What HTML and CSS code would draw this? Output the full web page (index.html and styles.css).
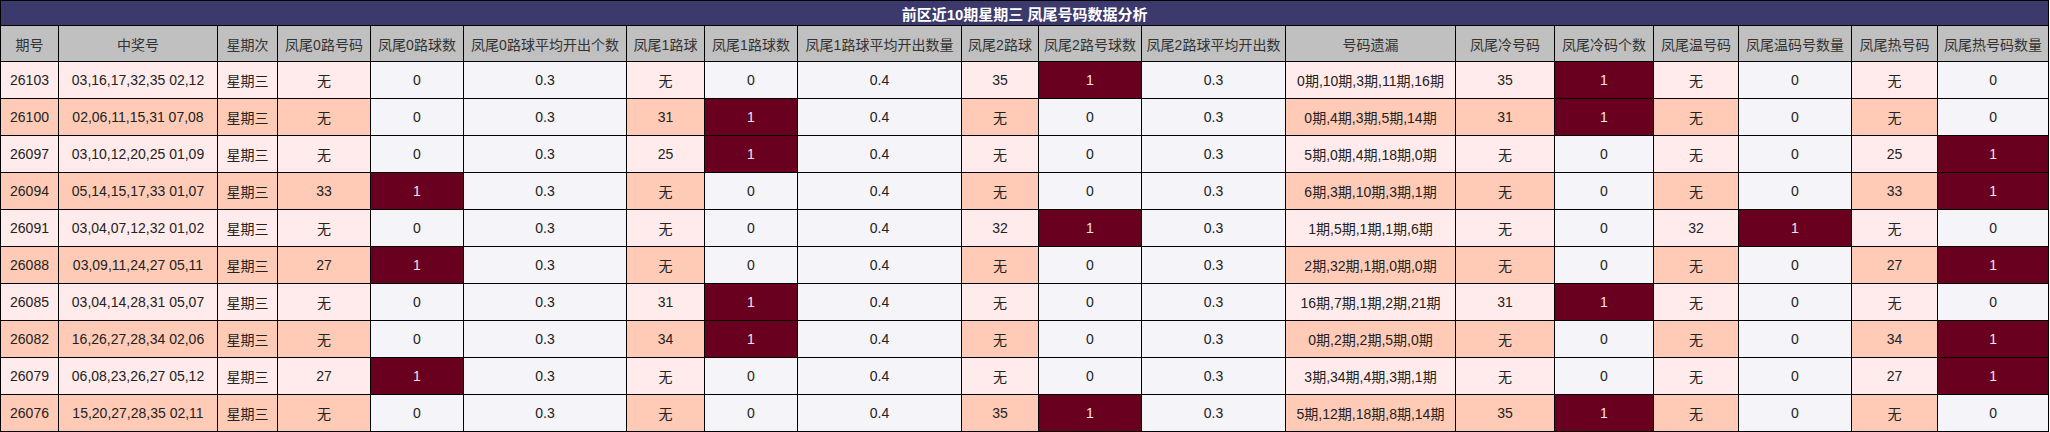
FILE: index.html
```html
<!DOCTYPE html>
<html lang="zh">
<head>
<meta charset="utf-8">
<title>凤尾号码数据分析</title>
<link rel="stylesheet" href="styles.css">
</head>
<body>
<table class="grid">
<colgroup>
<col class="w58"><col class="w159"><col class="w60"><col class="w93"><col class="w93"><col class="w163"><col class="w78"><col class="w93"><col class="w164"><col class="w77"><col class="w103"><col class="w144"><col class="w170"><col class="w99"><col class="w99"><col class="w85"><col class="w113"><col class="w86"><col class="w111">
</colgroup>
<thead>
<tr class="title-row"><th colspan="19" class="title">前区近10期星期三 凤尾号码数据分析</th></tr>
<tr class="head-row">
<th>期号</th><th>中奖号</th><th>星期次</th><th>凤尾0路号码</th><th>凤尾0路球数</th><th>凤尾0路球平均开出个数</th><th>凤尾1路球</th><th>凤尾1路球数</th><th>凤尾1路球平均开出数量</th><th>凤尾2路球</th><th>凤尾2路号球数</th><th>凤尾2路球平均开出数</th><th>号码遗漏</th><th>凤尾冷号码</th><th>凤尾冷码个数</th><th>凤尾温号码</th><th>凤尾温码号数量</th><th>凤尾热号码</th><th>凤尾热号码数量</th>
</tr>
</thead>
<tbody>
<tr class="odd"><td class="rc">26103</td><td class="rc">03,16,17,32,35 02,12</td><td class="rc">星期三</td><td class="rc">无</td><td class="gr">0</td><td class="gr">0.3</td><td class="rc">无</td><td class="gr">0</td><td class="gr">0.4</td><td class="rc">35</td><td class="hot">1</td><td class="gr">0.3</td><td class="rc">0期,10期,3期,11期,16期</td><td class="rc">35</td><td class="hot">1</td><td class="rc">无</td><td class="gr">0</td><td class="rc">无</td><td class="gr">0</td></tr>
<tr class="even"><td class="rc">26100</td><td class="rc">02,06,11,15,31 07,08</td><td class="rc">星期三</td><td class="rc">无</td><td class="gr">0</td><td class="gr">0.3</td><td class="rc">31</td><td class="hot">1</td><td class="gr">0.4</td><td class="rc">无</td><td class="gr">0</td><td class="gr">0.3</td><td class="rc">0期,4期,3期,5期,14期</td><td class="rc">31</td><td class="hot">1</td><td class="rc">无</td><td class="gr">0</td><td class="rc">无</td><td class="gr">0</td></tr>
<tr class="odd"><td class="rc">26097</td><td class="rc">03,10,12,20,25 01,09</td><td class="rc">星期三</td><td class="rc">无</td><td class="gr">0</td><td class="gr">0.3</td><td class="rc">25</td><td class="hot">1</td><td class="gr">0.4</td><td class="rc">无</td><td class="gr">0</td><td class="gr">0.3</td><td class="rc">5期,0期,4期,18期,0期</td><td class="rc">无</td><td class="gr">0</td><td class="rc">无</td><td class="gr">0</td><td class="rc">25</td><td class="hot">1</td></tr>
<tr class="even"><td class="rc">26094</td><td class="rc">05,14,15,17,33 01,07</td><td class="rc">星期三</td><td class="rc">33</td><td class="hot">1</td><td class="gr">0.3</td><td class="rc">无</td><td class="gr">0</td><td class="gr">0.4</td><td class="rc">无</td><td class="gr">0</td><td class="gr">0.3</td><td class="rc">6期,3期,10期,3期,1期</td><td class="rc">无</td><td class="gr">0</td><td class="rc">无</td><td class="gr">0</td><td class="rc">33</td><td class="hot">1</td></tr>
<tr class="odd"><td class="rc">26091</td><td class="rc">03,04,07,12,32 01,02</td><td class="rc">星期三</td><td class="rc">无</td><td class="gr">0</td><td class="gr">0.3</td><td class="rc">无</td><td class="gr">0</td><td class="gr">0.4</td><td class="rc">32</td><td class="hot">1</td><td class="gr">0.3</td><td class="rc">1期,5期,1期,1期,6期</td><td class="rc">无</td><td class="gr">0</td><td class="rc">32</td><td class="hot">1</td><td class="rc">无</td><td class="gr">0</td></tr>
<tr class="even"><td class="rc">26088</td><td class="rc">03,09,11,24,27 05,11</td><td class="rc">星期三</td><td class="rc">27</td><td class="hot">1</td><td class="gr">0.3</td><td class="rc">无</td><td class="gr">0</td><td class="gr">0.4</td><td class="rc">无</td><td class="gr">0</td><td class="gr">0.3</td><td class="rc">2期,32期,1期,0期,0期</td><td class="rc">无</td><td class="gr">0</td><td class="rc">无</td><td class="gr">0</td><td class="rc">27</td><td class="hot">1</td></tr>
<tr class="odd"><td class="rc">26085</td><td class="rc">03,04,14,28,31 05,07</td><td class="rc">星期三</td><td class="rc">无</td><td class="gr">0</td><td class="gr">0.3</td><td class="rc">31</td><td class="hot">1</td><td class="gr">0.4</td><td class="rc">无</td><td class="gr">0</td><td class="gr">0.3</td><td class="rc">16期,7期,1期,2期,21期</td><td class="rc">31</td><td class="hot">1</td><td class="rc">无</td><td class="gr">0</td><td class="rc">无</td><td class="gr">0</td></tr>
<tr class="even"><td class="rc">26082</td><td class="rc">16,26,27,28,34 02,06</td><td class="rc">星期三</td><td class="rc">无</td><td class="gr">0</td><td class="gr">0.3</td><td class="rc">34</td><td class="hot">1</td><td class="gr">0.4</td><td class="rc">无</td><td class="gr">0</td><td class="gr">0.3</td><td class="rc">0期,2期,2期,5期,0期</td><td class="rc">无</td><td class="gr">0</td><td class="rc">无</td><td class="gr">0</td><td class="rc">34</td><td class="hot">1</td></tr>
<tr class="odd"><td class="rc">26079</td><td class="rc">06,08,23,26,27 05,12</td><td class="rc">星期三</td><td class="rc">27</td><td class="hot">1</td><td class="gr">0.3</td><td class="rc">无</td><td class="gr">0</td><td class="gr">0.4</td><td class="rc">无</td><td class="gr">0</td><td class="gr">0.3</td><td class="rc">3期,34期,4期,3期,1期</td><td class="rc">无</td><td class="gr">0</td><td class="rc">无</td><td class="gr">0</td><td class="rc">27</td><td class="hot">1</td></tr>
<tr class="even"><td class="rc">26076</td><td class="rc">15,20,27,28,35 02,11</td><td class="rc">星期三</td><td class="rc">无</td><td class="gr">0</td><td class="gr">0.3</td><td class="rc">无</td><td class="gr">0</td><td class="gr">0.4</td><td class="rc">35</td><td class="hot">1</td><td class="gr">0.3</td><td class="rc">5期,12期,18期,8期,14期</td><td class="rc">35</td><td class="hot">1</td><td class="rc">无</td><td class="gr">0</td><td class="rc">无</td><td class="gr">0</td></tr>
</tbody>
</table>
</body>
</html>
```
FILE: styles.css
```css
html, body {
  margin: 0;
  padding: 0;
  background: #ffffff;
}
.grid {
  border-collapse: collapse;
  table-layout: fixed;
  width: 2049px;
  font-family: "Liberation Sans", Arial, "Noto Sans CJK SC", sans-serif;
  font-size: 14px;
  color: #222222;
}
.grid th, .grid td {
  border: 1px solid #000000;
  padding: 0;
  text-align: center;
  vertical-align: middle;
  white-space: nowrap;
  overflow: hidden;
}
.w58 { width: 58px; }
.w159 { width: 159px; }
.w60 { width: 60px; }
.w93 { width: 93px; }
.w163 { width: 163px; }
.w78 { width: 78px; }
.w164 { width: 164px; }
.w77 { width: 77px; }
.w103 { width: 103px; }
.w144 { width: 144px; }
.w170 { width: 170px; }
.w99 { width: 99px; }
.w85 { width: 85px; }
.w113 { width: 113px; }
.w86 { width: 86px; }
.w111 { width: 111px; }
.title-row { height: 25px; }
.title {
  background: #3c3a6d;
  color: #ffffff;
  font-size: 15px;
  font-weight: bold;
  border-bottom-width: 2px;
}
.head-row { height: 36px; }
.head-row th {
  background: #c0c0c0;
  font-weight: normal;
  color: #333333;
}
tbody tr { height: 37px; }
.odd .rc { background: #ffebeb; }
.even .rc { background: #ffcbb7; }
.gr { background: #f5f4f9; }
.hot {
  background: #6a001f;
  color: #f3e6ea;
}
```
